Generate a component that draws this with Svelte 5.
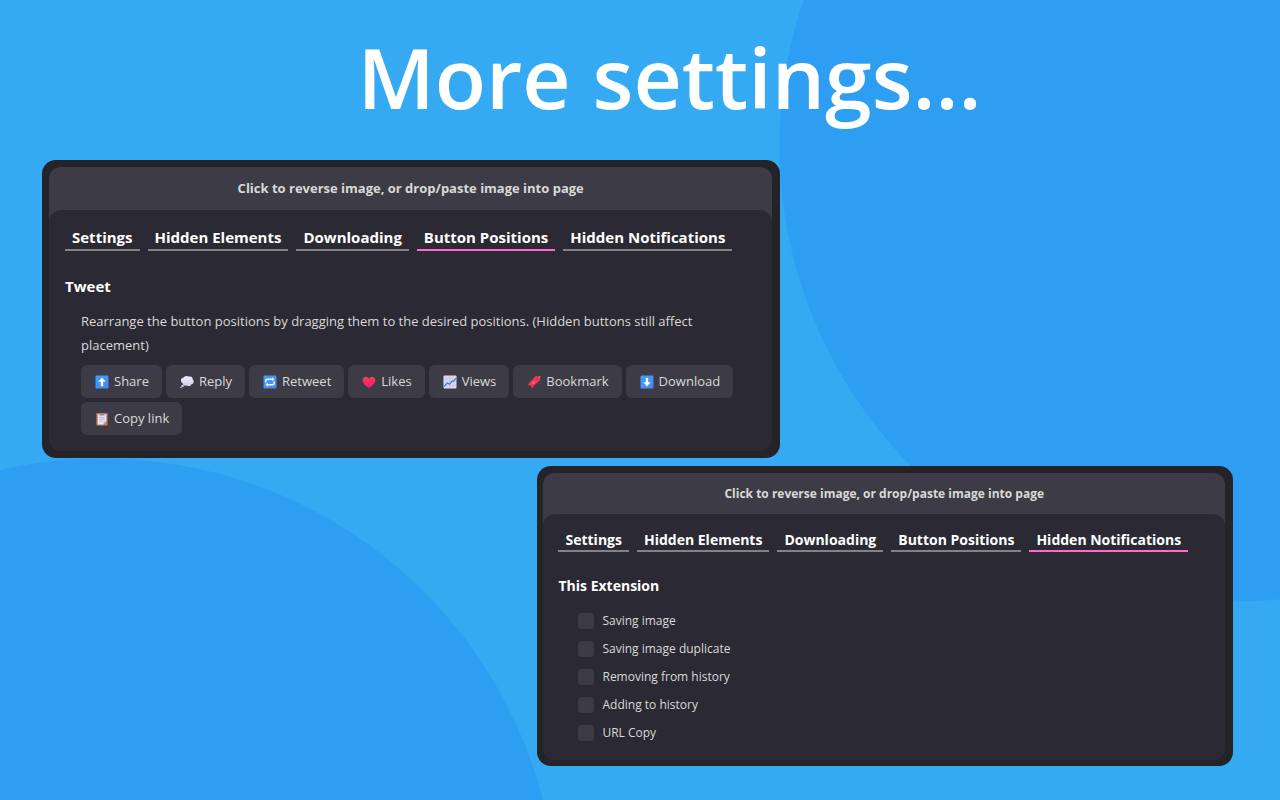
<script>
  const tabs = ['Settings', 'Hidden Elements', 'Downloading', 'Button Positions', 'Hidden Notifications'];
  const actions = [
    { icon: 'share', label: 'Share' },
    { icon: 'reply', label: 'Reply' },
    { icon: 'retweet', label: 'Retweet' },
    { icon: 'likes', label: 'Likes' },
    { icon: 'views', label: 'Views' },
    { icon: 'bookmark', label: 'Bookmark' },
    { icon: 'download', label: 'Download' },
    { icon: 'copy', label: 'Copy link' }
  ];
  const notices = ['Saving image', 'Saving image duplicate', 'Removing from history', 'Adding to history', 'URL Copy'];
  let firstTab = $state('Button Positions');
  let secondTab = $state('Hidden Notifications');
</script>

{#snippet glyph(name)}
  <svg class="glyph" viewBox="0 0 14 14" aria-hidden="true">
    {#if name === 'share' || name === 'download' || name === 'retweet'}
      <rect x="0.5" y="0.5" width="13" height="13" rx="1.2" fill="url(#tile)" />
    {/if}
    {#if name === 'share'}
      <path d="M7 2.8 10.3 6.4H8V11H6V6.4H3.7Z" fill="#fff" stroke="#fff" stroke-width=".4" stroke-linejoin="round" />
    {:else if name === 'download'}
      <path d="M7 11.2 10.3 7.6H8V3H6V7.6H3.7Z" fill="#fff" stroke="#fff" stroke-width=".4" stroke-linejoin="round" />
    {:else if name === 'retweet'}
      <path d="M2.8 7.4V5.8Q2.8 4.3 4.3 4.3H9.6M11.2 6.6V8.2Q11.2 9.7 9.7 9.7H4.4" fill="none" stroke="#f2f7ff" stroke-width="1.5" />
      <path d="M9 2.4 11.6 4.3 9 6.2ZM5 7.8 2.4 9.7 5 11.6Z" fill="#f2f7ff" />
    {:else if name === 'reply'}
      <g fill="url(#cloud)">
        <circle cx="4" cy="5.6" r="3" /><circle cx="6.6" cy="4" r="3" /><circle cx="9.8" cy="4.4" r="2.9" />
        <circle cx="11.1" cy="6.5" r="2.6" /><circle cx="8.8" cy="8.3" r="2.8" /><circle cx="5.4" cy="8" r="2.7" />
        <circle cx="2.5" cy="11" r="1.2" /><circle cx="1" cy="12.5" r=".7" />
      </g>
    {:else if name === 'likes'}
      <path d="M7 13C3.5 10.6.6 8.2.6 5 .6 3 2 1.7 3.8 1.7 5.2 1.7 6.4 2.5 7 3.7 7.6 2.5 8.8 1.7 10.2 1.7 12 1.7 13.4 3 13.4 5 13.4 8.2 10.5 10.6 7 13Z" fill="url(#heart)" />
    {:else if name === 'views'}
      <rect x=".5" y=".5" width="13" height="13" rx="1" fill="#ddd8ee" />
      <path d="M3.5 .5V13.5M6.7 .5V13.5M10 .5V13.5M.5 3.7H13.5M.5 7H13.5M.5 10.3H13.5" stroke="#c3bad9" stroke-width=".5" />
      <path d="M.8 11.5 4.5 8 6.5 9.2 9.3 5.9 10.5 6.4 13.3 3.2" fill="none" stroke="#2b8bd8" stroke-width="1.2" stroke-linejoin="round" />
    {:else if name === 'bookmark'}
      <path d="M8.8 1.3 12.3 1.6 12.9 5.2 6.6 10.6 5.4 13 4.2 10.6 .9 9.6 3 7.5Z" fill="#f6375b" stroke="#f6375b" stroke-width=".6" stroke-linejoin="round" />
      <path d="M5.3 6.5 7.5 8.9M7 6.5 5.6 8.9" stroke="#ff8b9c" stroke-width=".8" />
      <circle cx="10.6" cy="3.6" r="1.1" fill="#9c2538" />
      <path d="M10.6 3.6Q13.5 3 13.2 1" fill="none" stroke="#e8953f" stroke-width=".8" />
    {:else if name === 'copy'}
      <rect x="1.4" y="1" width="11.2" height="12.5" rx="1" fill="#c87850" />
      <path d="M2.7 2.3H11.3V9.7L8.6 12.4H2.7Z" fill="#e9e4f4" />
      <path d="M11.3 9.7H8.6V12.4Z" fill="#a99fbe" />
      <path d="M4.3 5.3H9.7M4.3 7.2H9.7M4.3 9.1H7.8" stroke="#b1a8c8" stroke-width=".8" />
      <path d="M4.4 3.4V1.8H5.8Q7-.3 8.2 1.8H9.6V3.4Z" fill="#8e889c" />
    {/if}
  </svg>
{/snippet}

<svg class="defs" aria-hidden="true">
  <defs>
    <linearGradient id="tile" x1="0" y1="0" x2="1" y2="1">
      <stop offset="0" stop-color="#3aa3fa" /><stop offset="1" stop-color="#4a86ee" />
    </linearGradient>
    <linearGradient id="cloud" x1="0" y1="0" x2="0" y2="14" gradientUnits="userSpaceOnUse">
      <stop offset="0" stop-color="#f4f1fb" /><stop offset="1" stop-color="#cdc3e4" />
    </linearGradient>
    <linearGradient id="heart" x1="0" y1="0" x2="0" y2="1">
      <stop offset="0" stop-color="#ff3a4e" /><stop offset="1" stop-color="#f31a7c" />
    </linearGradient>
  </defs>
</svg>

<main>
  <h1>More settings...</h1>

  <section class="panel large">
    <button class="drop">Click to reverse image, or drop/paste image into page</button>
    <div class="body">
      <nav>
        {#each tabs as tab}
          <button class="tab" class:active={tab === firstTab} onclick={() => (firstTab = tab)}>{tab}</button>
        {/each}
      </nav>
      <h2>Tweet</h2>
      <div class="group">
        <p>Rearrange the button positions by dragging them to the desired positions. (Hidden buttons still affect placement)</p>
        <div class="actions">
          {#each actions as action}
            <button class="action" draggable="true">{@render glyph(action.icon)}{action.label}</button>
          {/each}
        </div>
      </div>
    </div>
  </section>

  <section class="panel small">
    <button class="drop">Click to reverse image, or drop/paste image into page</button>
    <div class="body">
      <nav>
        {#each tabs as tab}
          <button class="tab" class:active={tab === secondTab} onclick={() => (secondTab = tab)}>{tab}</button>
        {/each}
      </nav>
      <h2>This Extension</h2>
      <div class="checks">
        {#each notices as notice}
          <label><input type="checkbox" />{notice}</label>
        {/each}
      </div>
    </div>
  </section>
</main>

<style>
  :global(body) {
    background: #36a9f3;
  }
  .defs {
    position: absolute;
    width: 0;
    height: 0;
  }
  main {
    box-sizing: border-box;
    min-height: 100vh;
    padding: 19px 47px 34px 42px;
    display: flex;
    flex-direction: column;
    background:
      radial-gradient(circle at 1235px 146px, #2d9ef1 455px, transparent 456px),
      radial-gradient(circle at 102px 914px, #2d9ef1 455px, transparent 456px),
      #36a9f3;
    font-family: "Open Sans", "Noto Sans", sans-serif;
    color: #d9d9d9;
  }
  h1 {
    margin: 0 0 25px;
    padding-left: 64px;
    text-align: center;
    font-size: 84px;
    line-height: 116px;
    font-weight: 600;
    color: #fff;
  }
  button {
    font-family: inherit;
    border: 0;
    cursor: pointer;
  }
  .panel {
    box-sizing: border-box;
    display: flex;
    flex-direction: column;
    background: #242428;
    border-radius: 14px;
  }
  .large {
    width: 62%;
    padding: 7px 8px 7px 7px;
    font-size: 13px;
  }
  .small {
    width: 58.4%;
    margin-top: 8px;
    align-self: flex-end;
    padding: 7px 8px 6px 6px;
    font-size: 12px;
  }
  .drop {
    padding: 0 0 12px;
    margin-bottom: -12px;
    border-radius: 12px 12px 0 0;
    background: #3d3c46;
    color: #d9d9d9;
    font-size: inherit;
    font-weight: 700;
    line-height: 43px;
  }
  .small .drop {
    line-height: 41px;
  }
  .body {
    background: #2b2933;
    border-radius: 12px;
    padding: 16px;
  }
  .small .body {
    padding: 15px;
  }
  nav {
    display: flex;
    flex-wrap: wrap;
    gap: 8px;
  }
  .tab {
    padding: 0 7px;
    background: none;
    border-bottom: 2px solid #848284;
    color: #fff;
    font-size: 15px;
    line-height: 23px;
    font-weight: 700;
  }
  .small .tab {
    font-size: 14px;
    line-height: 21px;
  }
  .tab.active {
    border-color: #ff6bcb;
  }
  h2 {
    margin: 24px 0 12px;
    font-size: 15px;
    line-height: 22px;
    font-weight: 700;
    color: #fff;
  }
  .small h2 {
    margin: 23px 0 12px;
    font-size: 14px;
  }
  .group {
    padding: 0 16px;
  }
  p {
    margin: 0 0 8px;
    line-height: 24px;
  }
  .actions {
    display: flex;
    flex-wrap: wrap;
    gap: 4px;
  }
  .action {
    display: flex;
    align-items: center;
    gap: 5px;
    padding: 0 13px 0 14px;
    border-radius: 6px;
    background: #3d3c46;
    color: #d9d9d9;
    font-size: 13px;
    line-height: 33px;
  }
  .glyph {
    width: 14px;
    height: 14px;
    flex: none;
  }
  .checks {
    display: flex;
    flex-direction: column;
    align-items: flex-start;
    gap: 4px;
    padding-left: 20px;
  }
  label {
    display: flex;
    align-items: center;
    gap: 8px;
    line-height: 24px;
  }
  input {
    appearance: none;
    width: 16px;
    height: 16px;
    margin: 0;
    border-radius: 4px;
    background: #3d3c46;
  }
  input:checked {
    background: #ff6bcb;
  }
</style>
